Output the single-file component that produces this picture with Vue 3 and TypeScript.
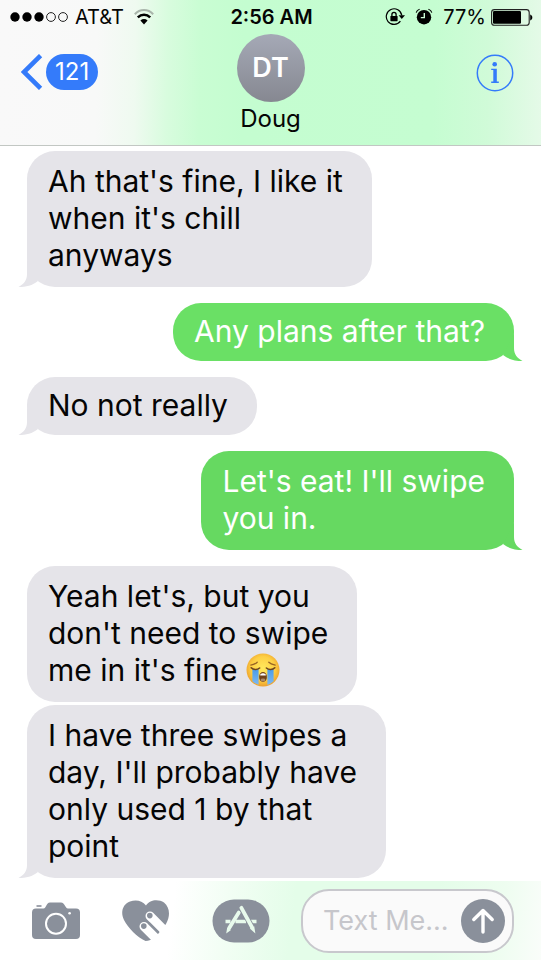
<script setup lang="ts">
import { ref } from 'vue'

interface Message {
  id: number
  from: 'them' | 'me'
  text: string
  crying?: boolean
  tail?: boolean
  tone?: 'light' | 'deep'
}

const draft = ref('')

const messages: Message[] = [
  { id: 1, from: 'them', text: "Ah that's fine, I like it\nwhen it's chill\nanyways", tail: true },
  { id: 2, from: 'me', text: 'Any plans after that?', tail: true, tone: 'light' },
  { id: 3, from: 'them', text: 'No not really', tail: true },
  { id: 4, from: 'me', text: "Let's eat! I'll swipe\nyou in.", tail: true, tone: 'deep' },
  { id: 5, from: 'them', text: "Yeah let's, but you\ndon't need to swipe\nme in it's fine ", crying: true },
  { id: 6, from: 'them', text: "I have three swipes a\nday, I'll probably have\nonly used 1 by that\npoint", tail: true },
]

const isSingleLine = (m: Message): boolean => !m.text.includes('\n')
</script>

<template>
  <div class="screen">
    <header class="top">
      <div class="status">
        <div class="status-left">
          <svg width="58" height="12" viewBox="0 0 58 12" aria-hidden="true">
            <circle cx="5" cy="6" r="4.7" />
            <circle cx="17" cy="6" r="4.7" />
            <circle cx="29" cy="6" r="4.7" />
            <circle cx="41" cy="6" r="4.4" fill="none" stroke="#222" stroke-width="1" />
            <circle cx="53" cy="6" r="4.4" fill="none" stroke="#222" stroke-width="1" />
          </svg>
          <span>AT&amp;T</span>
          <svg class="wifi" width="20" height="16" viewBox="0 0 20 16" aria-hidden="true">
            <path d="M0.8 5.2C6 -0.3 14 -0.3 19.2 5.2" fill="none" stroke="#a9b5ab" stroke-width="2" />
            <path d="M3.8 8.4C7.4 4.8 12.6 4.8 16.2 8.4" fill="none" stroke="#000" stroke-width="2.5" />
            <path d="M6.4 11.4C8.6 9.5 11.4 9.5 13.6 11.4L10 15.4Z" />
          </svg>
        </div>
        <strong class="clock">2:56 AM</strong>
        <div class="status-right">
          <svg width="20" height="18" viewBox="0 0 20 18" aria-hidden="true">
            <path d="M15.4 13.2A7.8 7.8 0 1 1 16.8 7.4" fill="none" stroke="#000" stroke-width="1.2" />
            <path d="M13.6 7.2H20L16.8 11Z" />
            <rect x="5.4" y="8" width="7.2" height="5.2" rx="0.6" />
            <path d="M6.9 8.4V6.6A2.1 2.2 0 0 1 11.1 6.6V8.4" fill="none" stroke="#000" stroke-width="1.3" />
          </svg>
          <svg class="alarm" width="18" height="18" viewBox="0 0 18 18" aria-hidden="true">
            <circle cx="9" cy="9.2" r="7.2" />
            <path d="M1.2 4.6C1.6 2.9 2.9 1.7 4.6 1.2M16.8 4.6C16.4 2.9 15.1 1.7 13.4 1.2" fill="none" stroke="#000" stroke-width="1.1" />
            <path d="M9.3 5V9.6H5.8" fill="none" stroke="#cdfbd6" stroke-width="1.4" />
          </svg>
          <span>77%</span>
          <svg class="battery" width="42" height="17" viewBox="0 0 42 17" aria-hidden="true">
            <rect x="0.6" y="0.6" width="37.6" height="15.6" rx="2.8" fill="none" stroke="#222" stroke-width="1.1" />
            <rect x="2" y="2" width="28" height="12.8" rx="1.2" />
            <path d="M39.2 5.4C42 6.2 42 10.6 39.2 11.4Z" />
          </svg>
        </div>
      </div>

      <nav class="nav">
        <button class="back" type="button" aria-label="Back, 121 unread">
          <svg width="22" height="36" viewBox="0 0 22 36" aria-hidden="true">
            <path d="M19.6 1.6L3 18L19.6 34.4" fill="none" stroke="#347bfa" stroke-width="4.6" />
          </svg>
          <span class="unread">121</span>
        </button>
        <div class="contact">
          <div class="avatar">DT</div>
          <div class="name">Doug</div>
        </div>
        <button class="info" type="button" aria-label="Details">
          <svg width="38" height="38" viewBox="0 0 38 38" aria-hidden="true">
            <circle cx="19" cy="19" r="17.7" fill="none" stroke="#347bfa" stroke-width="1.5" />
            <circle cx="18.7" cy="10.2" r="2.3" fill="#347bfa" />
            <path d="M15.2 14.7H20.8V27.6H22.8V29H15.2V27.6H17.3V16.1H15.2Z" fill="#347bfa" />
          </svg>
        </button>
      </nav>
    </header>

    <main class="chat">
      <div
        v-for="m in messages"
        :key="m.id"
        class="bubble"
        :class="[m.from, m.tone, { single: isSingleLine(m), followed: !m.tail }]"
      >{{ m.text }}<svg v-if="m.crying" class="emoji" width="34" height="34" viewBox="0 0 34 34" role="img" aria-label="Loudly crying face">
          <defs>
            <radialGradient id="face" cx="50%" cy="45%" r="55%">
              <stop offset="0" stop-color="#ffe95c" />
              <stop offset="0.65" stop-color="#fdcf45" />
              <stop offset="1" stop-color="#eda02c" />
            </radialGradient>
            <linearGradient id="tear" x1="0" y1="0" x2="0" y2="1">
              <stop offset="0" stop-color="#4a9be8" />
              <stop offset="1" stop-color="#7db9f2" />
            </linearGradient>
          </defs>
          <circle cx="17" cy="17" r="16.5" fill="url(#face)" />
          <path d="M6.4 16H12.6V31.8C10 31 8.2 29.8 6.4 28.2Z" fill="url(#tear)" />
          <path d="M21.4 16H27.6V28.2C25.8 29.8 24 31 21.4 31.8Z" fill="url(#tear)" />
          <path d="M5.2 14.8C7.4 17.2 11.4 17 13.6 15M20.4 15C22.6 17 26.6 17.2 28.8 14.8" fill="none" stroke="#70451c" stroke-width="1.6" stroke-linecap="round" />
          <path d="M4.8 12.2C7 11.6 9.6 10.8 11.2 9.2M29.2 12.2C27 11.6 24.4 10.8 22.8 9.2" fill="none" stroke="#9a6524" stroke-width="1.3" stroke-linecap="round" />
          <ellipse cx="17" cy="24" rx="3.9" ry="4.9" fill="#70421c" />
          <path d="M14.2 21.5Q17 18.9 19.8 21.5V22.5H14.2Z" fill="#fff" />
          <ellipse cx="17" cy="27" rx="2.4" ry="1.4" fill="#a98a6a" />
        </svg><svg v-if="m.tail" class="tail" width="20" height="28" viewBox="0 0 20 28" aria-hidden="true">
          <path d="M9 0V15C9 21 6 25 0.5 28C8 28 14.5 26.5 20 22Z" fill="currentColor" />
        </svg></div>
    </main>

    <footer class="composer">
      <button type="button" aria-label="Camera">
        <svg width="48" height="38" viewBox="0 0 48 38" aria-hidden="true">
          <rect x="4.5" y="3.2" width="5" height="1.6" fill="#8a909b" />
          <path d="M4 6.5H11.5C14.5 6.5 14 0.5 18 0.5H29C33 0.5 33 6.5 36 6.5H44Q48 6.5 48 10.5V33Q48 37 44 37H4Q0 37 0 33V10.5Q0 6.5 4 6.5Z" fill="#8a909b" />
          <circle cx="24" cy="21.7" r="10" fill="none" stroke="#fff" stroke-width="2" />
          <circle cx="37.6" cy="11.3" r="1.3" fill="#fff" />
        </svg>
      </button>
      <button type="button" aria-label="Digital Touch">
        <svg width="48" height="42" viewBox="0 0 48 42" aria-hidden="true">
          <path d="M24 5.5C28 -1 37 -1 42 2.5C48 7.5 48.5 16 44 24L34 36.5Q28 41 23.5 41C15 37 6 28 2 20C-2 12 1 4 8 1.5C14 -0.5 20 0.5 24 5.5Z" fill="#8a909b" />
          <path d="M28 16L46 34M22 26.5L37 41.5" stroke="#fff" stroke-width="9" stroke-linecap="round" />
          <path d="M27.5 23.5L36 32" stroke="#8a909b" stroke-width="2.2" stroke-linecap="round" />
          <circle cx="27.8" cy="15.6" r="2.8" fill="#8a909b" />
          <circle cx="21.8" cy="26.1" r="2.8" fill="#8a909b" />
        </svg>
      </button>
      <button type="button" aria-label="App Store">
        <svg width="58" height="44" viewBox="0 0 58 44" aria-hidden="true">
          <rect x="0.5" y="0.5" width="57" height="43" rx="21.5" fill="#8a909b" />
          <path d="M13.5 22.5H18.5M23.5 22.5H34M39 22.5H44.5" stroke="#e8faec" stroke-width="3.6" />
          <path d="M26.8 13.5L17.2 29" stroke="#e8faec" stroke-width="3.8" stroke-linecap="round" />
          <path d="M29.4 8.8L40.2 28.5" stroke="#8a909b" stroke-width="5.4" />
          <path d="M29.4 8.8L39.8 27.8" stroke="#e8faec" stroke-width="3.8" stroke-linecap="round" />
          <path d="M15.2 28.6L19 31L14.2 34.5Z M37.8 29.4L42.2 27.2L43.4 34.5Z" fill="#e8faec" />
        </svg>
      </button>
      <form class="field" @submit.prevent>
        <input v-model="draft" type="text" placeholder="Text Me..." aria-label="Text message" />
        <button class="send" type="submit" aria-label="Send">
          <svg width="24" height="26" viewBox="0 0 24 26" aria-hidden="true">
            <path d="M12 24V2.5M2.8 11.5L12 2.5L21.2 11.5" fill="none" stroke="#fff" stroke-width="3.4" stroke-linecap="round" stroke-linejoin="round" />
          </svg>
        </button>
      </form>
    </footer>
  </div>
</template>

<style>
body {
  margin: 0;
  background: #fff;
}
</style>

<style scoped>
.screen {
  display: flex;
  flex-direction: column;
  min-height: 100vh;
  font-family: Inter, "Liberation Sans", sans-serif;
  color: #050505;
  background: #fff;
}

button {
  display: flex;
  align-items: center;
  padding: 0;
  border: 0;
  background: none;
  font: inherit;
  cursor: pointer;
}

svg {
  display: block;
  flex: none;
}

.top {
  border-bottom: 1px solid #c2c7c3;
  background: linear-gradient(91deg, #f9f9f9 0%, #f8f9f8 18%, #effaf0 25%, #d8fcde 31%, #c9fdd3 37%, #c4fdd0 45%, #c5fdd1 80%, #d0fbd8 90%, #e5fae8 100%);
}

.status {
  display: grid;
  grid-template-columns: 1fr auto 1fr;
  align-items: center;
  height: 34px;
  padding: 0 8px 0 10px;
  font-size: 20px;
}

.status-left,
.status-right {
  display: flex;
  align-items: center;
}

.status-left {
  gap: 7px;
}

.status-right {
  justify-content: flex-end;
  gap: 10px;
}

.wifi {
  margin-left: 3px;
}

.battery {
  margin-left: -5px;
}

.clock {
  font-weight: 600;
}

.nav {
  display: grid;
  grid-template-columns: 1fr auto 1fr;
  align-items: start;
  height: 111px;
  padding: 0 21px;
}

.back {
  justify-self: start;
  gap: 3px;
  margin-top: 20px;
}

.unread {
  padding: 0 9px;
  border-radius: 18px;
  background: #347bfa;
  color: #fff;
  font-size: 24px;
  line-height: 36px;
}

.contact {
  text-align: center;
}

.avatar {
  width: 68px;
  height: 68px;
  margin: 0 auto;
  border-radius: 50%;
  background: linear-gradient(#a5a9b6, #868891);
  color: #fff;
  font-size: 27px;
  font-weight: 600;
  line-height: 67px;
}

.name {
  font-size: 24px;
  line-height: 34px;
}

.info {
  justify-self: end;
  margin-top: 20px;
  padding-right: 6px;
}

.chat {
  display: flex;
  flex: 1;
  flex-direction: column;
  align-items: flex-start;
  gap: 16px;
  padding: 5px 27px 2px;
}

.bubble {
  position: relative;
  padding: 12px 29px 13px 21px;
  border-radius: 28px;
  font-size: 30px;
  line-height: 37px;
  white-space: pre-wrap;
}

.bubble.single {
  padding-top: 10px;
  padding-bottom: 11px;
}

.bubble.followed {
  margin-bottom: -13px;
}

.them {
  background: #e5e4e9;
}

.me {
  align-self: flex-end;
  color: #fff;
}

.me.light {
  background: #6ae065;
}

.me.deep {
  background: #66d961;
}

.tail {
  position: absolute;
  bottom: 0;
  left: -9px;
  color: #e5e4e9;
}

.me .tail {
  right: -9px;
  left: auto;
  transform: scaleX(-1);
}

.me.light .tail {
  color: #6ae065;
}

.me.deep .tail {
  color: #66d961;
}

.emoji {
  display: inline-block;
  height: 34px;
  vertical-align: -6px;
  margin-top: -6px;
}

.composer {
  display: flex;
  align-items: center;
  gap: 42px;
  height: 79px;
  padding: 0 27px 0 32px;
  background: linear-gradient(97deg, #fff 0%, #fff 32%, #f2fef4 42%, #e4fde9 54%, #e4fde9 80%, #eefdf0 92%, #fafdfa 100%);
}

.field {
  display: flex;
  flex: 1;
  align-items: center;
  min-width: 0;
  height: 60px;
  margin-left: -11px;
  padding: 0 7px 0 20px;
  border: 2px solid #c8c8cd;
  border-radius: 28px;
  background: #fafafa;
}

.field input {
  flex: 1;
  width: 0;
  min-width: 0;
  padding: 0;
  border: 0;
  outline: 0;
  background: none;
  color: #050505;
  font: 27px Inter, "Liberation Sans", sans-serif;
}

.field input::placeholder {
  color: #c6c6cb;
  opacity: 1;
}

.send {
  justify-content: center;
  flex: none;
  width: 44px;
  height: 44px;
  border-radius: 50%;
  background: #8a909b;
}
</style>
